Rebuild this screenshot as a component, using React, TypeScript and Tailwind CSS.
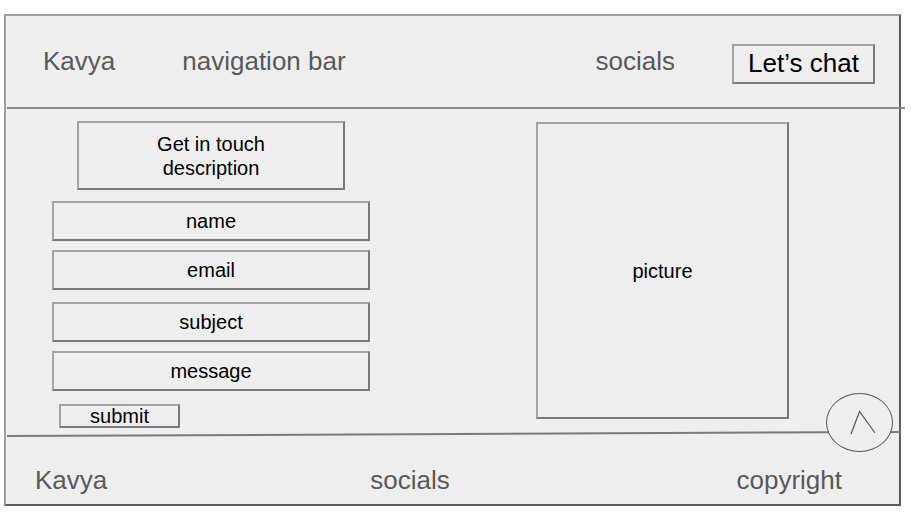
const fields = ['name', 'email', 'subject', 'message'];
const fieldGaps = ['mt-[11px]', 'mt-[9px]', 'mt-[12px]', 'mt-[9px]'];

const box = 'border-2 border-t-[#a3a3a3] border-l-[#a3a3a3] border-r-[#7a7a7a] border-b-[#7a7a7a]';

export default function App() {
  return (
    <div className="h-[515px] w-[912px] bg-white pl-[4px] pt-[14px] font-['Liberation_Sans',Arial,sans-serif]">
      <div className="relative flex h-[492px] w-[897px] flex-col border-2 border-t-[#a0a0a0] border-l-[#a0a0a0] border-r-[#5c5c5c] border-b-[#5c5c5c] bg-[#eeeeee]">
        {/* header */}
        <header className="flex h-[91px] items-center pl-[37px] pr-[24px] text-[26px] text-[#595959]">
          <span>Kavya</span>
          <span className="ml-[67px]">navigation bar</span>
          <span className="ml-auto">socials</span>
          <div className={`ml-[57px] mt-[5px] flex h-[40px] w-[143px] items-center justify-center pb-[1px] text-black ${box}`}>
            Let’s chat
          </div>
        </header>
        <div className="ml-[1px] h-[2px] w-[898px] bg-[#8a8a8a]" />

        {/* contact section */}
        <main className="flex h-[324px]">
          <div className="flex flex-col pl-[46px] pt-[12px]">
            <div className={`ml-[25px] flex h-[69px] w-[268px] items-center justify-center text-center text-[20px] leading-[24px] text-black ${box}`}>
              Get in touch
              <br />
              description
            </div>
            {fields.map((f, i) => (
              <div
                key={f}
                className={`${fieldGaps[i]} flex h-[40px] w-[318px] items-center justify-center text-[20px] text-black ${box}`}
              >
                {f}
              </div>
            ))}
            <div className={`ml-[7px] mt-[13px] flex h-[24px] w-[121px] items-center justify-center text-[20px] leading-none text-black ${box}`}>
              submit
            </div>
          </div>
          <div className={`ml-[166px] mt-[13px] flex h-[297px] w-[253px] items-center justify-center text-[20px] text-black ${box}`}>
            picture
          </div>
        </main>
        <div className="ml-[1px] h-[2px] w-[893px] -rotate-[0.26deg] bg-[#7a7a7a]" />

        {/* footer */}
        <footer className="flex flex-1 items-center pb-[4px] pl-[29px] pr-[57px] pt-[26px] text-[26px] text-[#595959]">
          <span>Kavya</span>
          <span className="ml-[263px]">socials</span>
          <span className="ml-auto">copyright</span>
        </footer>

        {/* back to top */}
        <div className="absolute left-[820px] top-[377px] h-[59px] w-[67px] rounded-[50%] border border-[#555] bg-[#eeeeee]">
          <svg width="67" height="59" viewBox="0 0 67 59" className="absolute -left-px -top-px">
            <path d="M25 41 L33.5 18.5 L49 40" fill="none" stroke="#555" strokeWidth="1.2" />
          </svg>
        </div>
      </div>
    </div>
  );
}
